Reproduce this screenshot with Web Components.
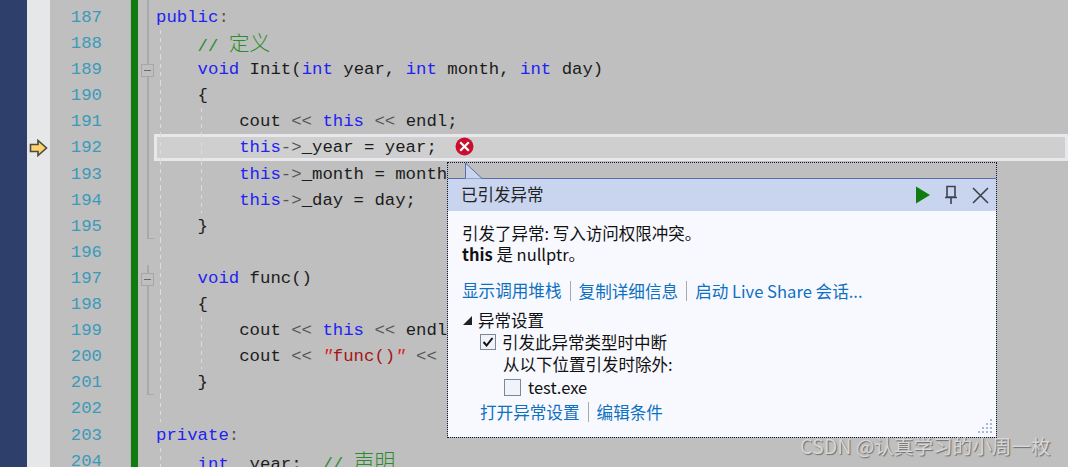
<!DOCTYPE html>
<html>
<head>
<meta charset="utf-8">
<title>exception</title>
<style>
  html, body { margin: 0; height: 467px; overflow: hidden; background: #bfbfbf; }
</style>
</head>
<body>
<code-editor>
  <exception-popup></exception-popup>
  <water-mark>CSDN @认真学习的小周一枚</water-mark>
</code-editor>

<script>
// k = keyword, c = comment, s = string, q = string quote, o = operator, p = plain
const LINES = [
  { n: 187, fold: 'line', code: [['k', 'public'], ['o', ':']] },
  { n: 188, fold: 'line', g1: 1, code: [['p', '    '], ['c', '// '], ['z', '定义']] },
  { n: 189, fold: 'box', g1: 1, code: [['p', '    '], ['k', 'void'], ['p', ' Init('], ['k', 'int'], ['p', ' year, '], ['k', 'int'], ['p', ' month, '], ['k', 'int'], ['p', ' day)']] },
  { n: 190, fold: 'line', g1: 1, code: [['p', '    {']] },
  { n: 191, fold: 'line', g1: 1, g2: 1, code: [['p', '        cout '], ['o', '<<'], ['p', ' '], ['k', 'this'], ['p', ' '], ['o', '<<'], ['p', ' endl;']] },
  { n: 192, fold: 'line', g1: 1, g2: 1, current: 1, code: [['p', '        '], ['k', 'this'], ['o', '->'], ['p', '_year = year;']] },
  { n: 193, fold: 'line', g1: 1, g2: 1, code: [['p', '        '], ['k', 'this'], ['o', '->'], ['p', '_month = month;']] },
  { n: 194, fold: 'line', g1: 1, g2: 1, code: [['p', '        '], ['k', 'this'], ['o', '->'], ['p', '_day = day;']] },
  { n: 195, fold: 'end', g1: 1, code: [['p', '    }']] },
  { n: 196, g1: 1, code: [] },
  { n: 197, fold: 'box', g1: 1, code: [['p', '    '], ['k', 'void'], ['p', ' func()']] },
  { n: 198, fold: 'line', g1: 1, code: [['p', '    {']] },
  { n: 199, fold: 'line', g1: 1, g2: 1, code: [['p', '        cout '], ['o', '<<'], ['p', ' '], ['k', 'this'], ['p', ' '], ['o', '<<'], ['p', ' endl;']] },
  { n: 200, fold: 'line', g1: 1, g2: 1, code: [['p', '        cout '], ['o', '<<'], ['p', ' '], ['q', '"'], ['s', 'func()'], ['q', '"'], ['p', ' '], ['o', '<<'], ['p', ' endl;']] },
  { n: 201, fold: 'end', g1: 1, code: [['p', '    }']] },
  { n: 202, g1: 1, code: [] },
  { n: 203, code: [['k', 'private'], ['o', ':']] },
  { n: 204, g1: 1, code: [['p', '    '], ['k', 'int'], ['p', '  year;  '], ['c', '// '], ['z', '声明']] }
];

class CodeEditor extends HTMLElement {
  constructor() {
    super();
    this.attachShadow({ mode: 'open' });
  }

  connectedCallback() {
    const rows = LINES.map(l => this.renderRow(l)).join('');
    this.shadowRoot.innerHTML = `
      <style>
        :host {
          display: block;
          position: relative;
          width: 1068px;
          height: 467px;
          overflow: hidden;
          background: #bfbfbf;
          font-family: "Liberation Mono", monospace;
          font-size: 17.33px;
          color: #1c1c1c;
        }
        .row { display: flex; height: 26.1px; }
        .row.spacer { height: 4px; }
        .side { width: 27px; background: #2f3f6b; flex: none; }
        .glyph { width: 23px; background: #e6e7e9; flex: none; display: flex; align-items: center; box-sizing: border-box; padding-left: 2px; }
        .num {
          width: 81px; flex: none; box-sizing: border-box;
          padding: 2px 28px 0 0; text-align: right; color: #3b9aba;
          border-right: 1px solid #b4b4b4;
          line-height: 24px;
        }
        .change { width: 7px; background: #107c10; flex: none; }
        .fold { width: 17px; flex: none; position: relative; }
        .fold.line::before, .fold.box::before, .fold.end::before {
          content: ""; position: absolute; left: 9px; top: 0; bottom: 0; width: 2px; background: #a9a9a9;
        }
        .fold.end::after {
          content: ""; position: absolute; left: 9px; bottom: 0; width: 7px; height: 1px; background: #a9a9a9;
        }
        .fold .box-icon {
          position: absolute; left: 3px; top: 8px; width: 11px; height: 11px;
          border: 1px solid #a6a6a6; background: #bfbfbf; box-sizing: content-box;
          display: flex; align-items: center; justify-content: center;
        }
        .fold .box-icon i { display: block; width: 7px; height: 1px; background: #6a6a6a; }
        .code {
          flex: 1; box-sizing: border-box; padding: 2px 0 0 1px; white-space: pre;
          line-height: 24px; position: relative;
        }
        .guide { position: absolute; top: 0; bottom: 0; width: 1px;
          background: repeating-linear-gradient(to bottom, #dcdcdc 0 4px, transparent 4px 8px); }
        .guide.g1 { left: 5px; }
        .guide.g2 { left: 46px; }
        .code.current { background: #cfcfcf; box-shadow: inset 0 0 0 3px #e7e7ec; margin-left: -1px; padding-left: 2px; }
        .code.current .guide.g1 { left: 6px; }
        .code.current .guide.g2 { left: 47px; }
        .t { position: relative; }
        .k { color: #2222f5; }
        .c { color: #2c8c2c; }
        .z { color: #2c8c2c; font-family: "Noto Sans CJK SC", sans-serif; font-size: 20.8px; font-weight: 300; line-height: 20px; }
        .s { color: #a31515; }
        .q { color: #e02020; font-style: italic; }
        .o { color: #555; }
        .err { display: inline-block; vertical-align: -4px; margin-left: 18px; position: relative; }
      </style>
      <div class="row spacer"><div class="side"></div><div class="glyph"></div><div class="num"></div><div class="change"></div><div class="fold line"></div><div class="code"></div></div>
      ${rows}
      <slot></slot>
    `;
  }

  renderRow(l) {
    const tokens = l.code.map(([cls, text]) => {
      const safe = text.replace(/&/g, '&amp;').replace(/</g, '&lt;').replace(/>/g, '&gt;');
      return `<span class="t ${cls}">${safe}</span>`;
    }).join('');
    const arrow = l.current ? `<svg width="19" height="18" viewBox="0 0 19 18"><path d="M1.5 5.5H9V1.5L17.5 9 9 16.5V12.5H1.5Z" fill="#ffd36b" stroke="#4a4a42" stroke-width="1.6"/></svg>` : '';
    const box = l.fold === 'box' ? '<span class="box-icon"><i></i></span>' : '';
    const err = l.current ? `<svg class="err" width="19" height="19" viewBox="0 0 19 19"><circle cx="9.5" cy="9.5" r="9" fill="#c80f2e"/><path d="M5.2 5.2L13.8 13.8M13.8 5.2L5.2 13.8" stroke="#fff" stroke-width="2.2"/></svg>` : '';
    return `<div class="row">
      <div class="side"></div>
      <div class="glyph">${arrow}</div>
      <div class="num">${l.n}</div>
      <div class="change"></div>
      <div class="fold ${l.fold || ''}">${box}</div>
      <div class="code ${l.current ? 'current' : ''}">${l.g1 ? '<span class="guide g1"></span>' : ''}${l.g2 ? '<span class="guide g2"></span>' : ''}${tokens}${err}</div>
    </div>`;
  }
}
customElements.define('code-editor', CodeEditor);

class ExceptionPopup extends HTMLElement {
  constructor() {
    super();
    this.attachShadow({ mode: 'open' });
  }

  connectedCallback() {
    this.shadowRoot.innerHTML = `
      <style>
        :host {
          display: flex;
          flex-direction: column;
          position: absolute;
          left: 447px;
          top: 162px;
          width: 550px;
          height: 276px;
          box-sizing: border-box;
          border: 1px dotted #10183a;
          background: #bfbfbf;
          font-family: "Noto Sans CJK SC", sans-serif;
          font-size: 16.5px;
          color: #111;
        }
        .gap { height: 15px; flex: none; }
        .tail { position: absolute; left: 17px; top: 0; }
        .head {
          height: 33px; flex: none; box-sizing: border-box;
          background: #c9d5ef; border-top: 1px solid #5a6ea8;
          display: flex; align-items: center; padding: 0 7px 0 13px;
        }
        .title { flex: 1; color: #222; line-height: 30px; padding-bottom: 2px; }
        .head svg { display: block; flex: none; }
        .body {
          flex: 1; background: #f8f9ff; position: relative;
          padding: 12px 0 0 14px;
          line-height: 21px;
        }
        b { font-weight: 700; }
        .links { display: flex; align-items: center; margin-top: 15px; height: 21px; color: #0e70c0; font-size: 16.6px; }
        .links span + span { border-left: 1px solid #a9a9a9; margin-left: 8px; padding-left: 8px; line-height: 20px; }
        .section { display: flex; align-items: center; margin-top: 8px; height: 22px; }
        .tri { width: 0; height: 0; border-style: solid; border-width: 0 0 9px 9px; border-color: transparent transparent #222 transparent; margin: 0 6px 0 1px; }
        .opt { display: flex; align-items: center; height: 22.5px; }
        .opt.l1 { padding-left: 18px; }
        .opt.l2 { padding-left: 41px; }
        .box { width: 14px; height: 14px; border: 1px solid #7d8798; background: #f0f3fa; flex: none; margin-right: 6px; display: block; }
        .opt.l3 { padding-left: 42px; }
        .opt.l3 .box { width: 15px; height: 15px; margin-right: 7px; }
        .bottom { margin: 3px 0 0 18px; }
        .grip { position: absolute; right: 3px; bottom: 3px; }
      </style>
      <div class="gap"></div>
      <svg class="tail" width="18" height="16" viewBox="0 0 18 16"><path d="M0.5 0V15.5H17L0.5 0Z" fill="#c9d5ef"/><path d="M0.5 0L17 15.5" stroke="#5a6ea8" fill="none"/><path d="M0.5 0V15" stroke="#5a6ea8" fill="none"/></svg>
      <div class="head">
        <span class="title">已引发异常</span>
        <svg width="16" height="18" viewBox="0 0 16 18" style="margin-right:13px"><path d="M1 0.5L15 9 1 17.5Z" fill="#107c10"/></svg>
        <svg width="14" height="20" viewBox="0 0 14 20" style="margin-right:14px"><path d="M3 1.5H11V12H3ZM1 12.5H13" fill="none" stroke="#3c4250" stroke-width="1.6"/><path d="M7 13V19" stroke="#3c4250" stroke-width="1.6"/></svg>
        <svg width="17" height="17" viewBox="0 0 17 17"><path d="M1 1L16 16M16 1L1 16" stroke="#3c4250" stroke-width="1.6"/></svg>
      </div>
      <div class="body">
        <div>引发了异常: 写入访问权限冲突。</div>
        <div><b>this</b> 是 nullptr。</div>
        <div class="links"><span>显示调用堆栈</span><span>复制详细信息</span><span>启动 Live Share 会话...</span></div>
        <div class="section"><i class="tri"></i><span>异常设置</span></div>
        <div class="opt l1">
          <svg class="box" viewBox="0 0 14 14"><path d="M2.5 7L5.6 10.5 11.5 3" fill="none" stroke="#111" stroke-width="2"/></svg>
          <span>引发此异常类型时中断</span>
        </div>
        <div class="opt l2">从以下位置引发时除外:</div>
        <div class="opt l3"><i class="box"></i><span>test.exe</span></div>
        <div class="links bottom"><span>打开异常设置</span><span>编辑条件</span></div>
        <svg class="grip" width="15" height="15" viewBox="0 0 15 15" fill="#aab8d8">
          <rect x="12" y="0" width="2" height="2"/>
          <rect x="12" y="4" width="2" height="2"/><rect x="8" y="4" width="2" height="2"/>
          <rect x="12" y="8" width="2" height="2"/><rect x="8" y="8" width="2" height="2"/><rect x="4" y="8" width="2" height="2"/>
          <rect x="12" y="12" width="2" height="2"/><rect x="8" y="12" width="2" height="2"/><rect x="4" y="12" width="2" height="2"/><rect x="0" y="12" width="2" height="2"/>
        </svg>
      </div>
    `;
  }
}
customElements.define('exception-popup', ExceptionPopup);

class WaterMark extends HTMLElement {
  constructor() {
    super();
    this.attachShadow({ mode: 'open' });
    this.shadowRoot.innerHTML = `
      <style>
        :host {
          position: absolute;
          left: 800px;
          top: 432px;
          font-family: "Noto Sans CJK SC", sans-serif;
          font-size: 19.6px;
          line-height: 28px;
          color: #d6d6d6;
          text-shadow: 1px 1px 1px #6e6e6e;
          white-space: nowrap;
        }
      </style>
      <slot></slot>
    `;
  }
}
customElements.define('water-mark', WaterMark);
</script>
</body>
</html>
